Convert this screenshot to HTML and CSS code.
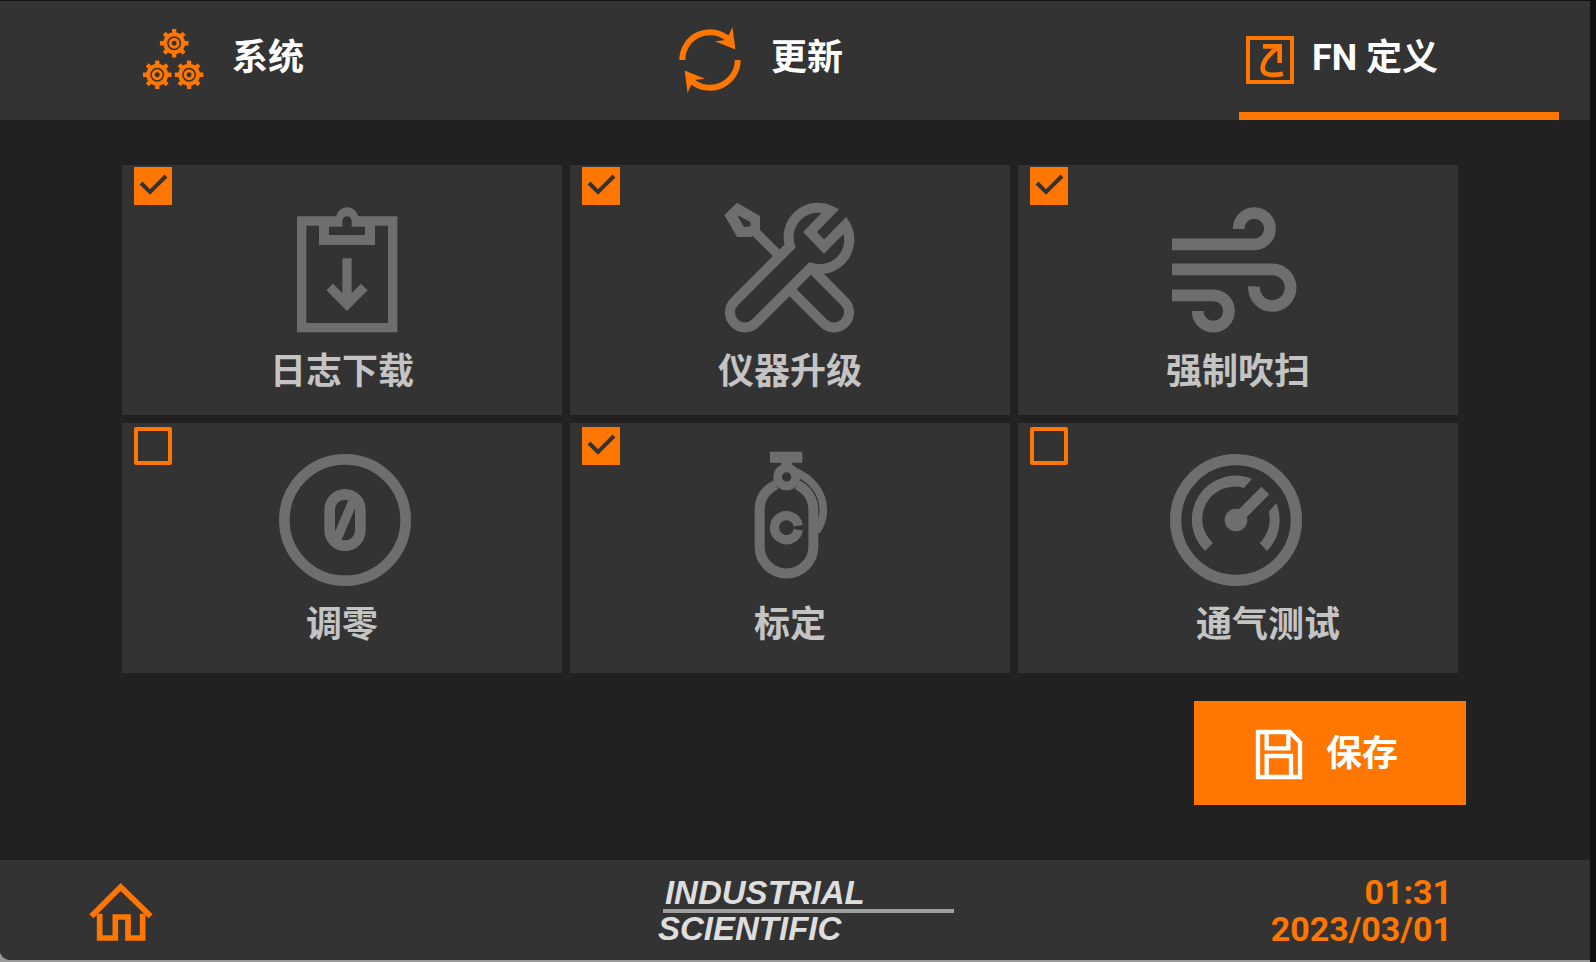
FILE: index.html
```html
<!DOCTYPE html>
<html lang="zh-CN">
<head>
    <meta charset="UTF-8">
    <meta name="viewport" content="width=device-width, initial-scale=1.0">
    <title>FN 定义</title>
    <link rel="stylesheet" href="styles.css">
</head>
<body>
    <div class="frame">
    <div class="screen">
        <nav class="tabs">
            <a class="tab" href="#system">
                <svg class="icon-gears" viewBox="0 0 184 184" aria-hidden="true">
                    <defs>
                        <g id="gear">
                            <circle r="27" stroke-width="12"/>
                            <circle r="12" stroke-width="9"/>
                            <path stroke-width="13" d="M0-43V-30M0 43V30M-43 0H-30M43 0H30M-30-30l9 9M30 30l-9-9M30-30l-9 9M-30 30l9-9"/>
                        </g>
                    </defs>
                    <use href="#gear" x="94" y="43"/>
                    <use href="#gear" x="43" y="138"/>
                    <use href="#gear" x="139" y="138"/>
                </svg>
                <span class="tab-text">系统</span>
            </a>
            <a class="tab" href="#update">
                <svg class="icon-update" viewBox="0 0 200 200" aria-hidden="true">
                    <path stroke-width="18" d="M16 100A84 84 0 0 1 157 38M184 100A84 84 0 0 1 43 162"/>
                    <path class="solid" d="M168 0L177 68L115 43L143 40L157 24ZM32 200L23 132L85 157L57 160L43 176Z"/>
                </svg>
                <span class="tab-text">更新</span>
            </a>
            <a class="tab active" href="#fn">
                <svg class="icon-fn" viewBox="0 0 144 144" aria-hidden="true">
                    <rect x="6" y="6" width="132" height="132" stroke-width="12"/>
                    <path stroke-width="14" d="M51 31H101V81"/>
                    <path stroke-width="14" d="M99 32C70 53 50 75 50 96C50 118 78 120 111 113"/>
                </svg>
                <span class="tab-text">FN 定义</span>
            </a>
        </nav>

        <main>
            <form class="functions">
                <div class="tiles">
                    <label class="tile">
                        <input type="checkbox" name="log" checked>
                        <svg viewBox="0 0 396 396" aria-hidden="true">
                            <path stroke-width="28" d="M129 60H77V380H350V60H297"/>
                            <path class="solid" fill-rule="evenodd" d="M129 46H181A33 33 0 0 1 246 46H297V132H129ZM159 77V102H267V77H227V60A14 14 0 0 0 199 60V77Z"/>
                            <path stroke-width="28" d="M213 172V300M161 258L213 310L265 258"/>
                        </svg>
                        <span class="tile-text">日志下载</span>
                    </label>
                    <label class="tile">
                        <input type="checkbox" name="upgrade" checked>
                        <svg viewBox="0 0 396 396" aria-hidden="true">
                            <path class="solid" fill-rule="evenodd" d="M39 5L108 45V84L83 108H39L1 42ZM39 42L60 78L80 76V64Z"/>
                            <path stroke-width="28" d="M92 91L162 161"/>
                            <path stroke-width="30" d="M31 302L198 135A88 88 0 0 1 320 29L258 93L300 137L364 72A88 88 0 0 1 261 200L95 366A45 45 0 0 1 31 302Z"/>
                            <path stroke-width="30" d="M265 205L362 302A45 45 0 0 1 298 366L196 264"/>
                        </svg>
                        <span class="tile-text">仪器升级</span>
                    </label>
                    <label class="tile">
                        <input type="checkbox" name="purge" checked>
                        <svg viewBox="0 0 396 396" aria-hidden="true">
                            <path stroke-width="35" d="M0 130H247A47 47 0 1 0 200 84M0 205H300A55 55 0 1 1 246 256M0 283H124A47 47 0 1 1 77 330"/>
                        </svg>
                        <span class="tile-text">强制吹扫</span>
                    </label>
                    <label class="tile">
                        <input type="checkbox" name="zero">
                        <svg viewBox="0 0 396 396" aria-hidden="true">
                            <circle cx="207" cy="198" r="182" stroke-width="32"/>
                            <rect x="161" y="121" width="92" height="154" rx="46" stroke-width="32"/>
                            <path stroke-width="28" d="M235 132L179 264"/>
                        </svg>
                        <span class="tile-text">调零</span>
                    </label>
                    <label class="tile">
                        <input type="checkbox" name="calibrate" checked>
                        <svg viewBox="0 0 396 396" aria-hidden="true">
                            <path class="solid" d="M138-7H235V26H205V40H172V26H138Z"/>
                            <circle cx="188" cy="69" r="27" stroke-width="26"/>
                            <path stroke-width="30" d="M156 92C122 108 107 136 107 168V278A80 80 0 0 0 268 278V168C268 136 250 108 220 92"/>
                            <path stroke-width="23" d="M205 49C268 74 298 120 298 168C298 196 290 214 278 232"/>
                            <path stroke-width="28" d="M223 215A36 36 0 1 0 223 227"/>
                        </svg>
                        <span class="tile-text">标定</span>
                    </label>
                    <label class="tile">
                        <input type="checkbox" name="bump">
                        <svg viewBox="0 0 396 396" aria-hidden="true">
                            <circle cx="192" cy="198" r="181" stroke-width="34"/>
                            <path class="solid" d="M240 74A132 132 0 0 0 99 291L123 267A97 97 0 0 1 216 102ZM313 148A132 132 0 0 1 285 291L263 267A97 97 0 0 0 290 173Z"/>
                            <circle class="solid" cx="192" cy="198" r="34"/>
                            <path stroke-width="33" d="M192 198L280 110"/>
                        </svg>
                        <span class="tile-text shifted">通气测试</span>
                    </label>
                </div>

                <div class="actions">
                    <button type="submit" class="save">
                        <svg class="icon-save" viewBox="0 0 138 147" aria-hidden="true">
                            <path stroke-width="13" d="M6 6H101L132 37V141H6Z"/>
                            <path stroke-width="13" d="M32 6V55H97V6M32 141V78H105V141"/>
                        </svg>
                        <span>保存</span>
                    </button>
                </div>
            </form>
        </main>

        <footer class="bottom">
            <a class="home" href="#home" aria-label="Home">
                <svg class="icon-home" viewBox="0 0 192 177" aria-hidden="true">
                    <path stroke-width="17" d="M7 103L95 15L185 103"/>
                    <path stroke-width="17" d="M32 95V168H79V105H117V168H161V95"/>
                </svg>
            </a>
            <div class="logo">
                <span class="logo-top">INDUSTRIAL</span>
                <span class="logo-bottom">SCIENTIFIC</span>
            </div>
            <div class="clock">
                <span>01:31</span>
                <span>2023/03/01</span>
            </div>
        </footer>
    </div>
    </div>
</body>
</html>
```
FILE: styles.css
```css
* {
    box-sizing: border-box;
}

body {
    margin: 0;
    padding: 1px 6px 0 0;
    background-color: #111;
    color: white;
    font-family: Roboto, "Noto Sans CJK SC", sans-serif;
    font-size: 36px;
    font-weight: bold;
    line-height: 44px;
}

svg {
    display: block;
    fill: none;
    stroke: currentColor;
    overflow: visible;
}

.solid {
    fill: currentColor;
    stroke: none;
}

.frame {
    display: flex;
    min-height: calc(100vh - 1px);
    padding-bottom: 2px;
    background-color: #999;
}

.screen {
    flex: 1;
    display: flex;
    flex-direction: column;
    background-color: #212121;
    border-bottom-left-radius: 10px;
    overflow: hidden;
}

/* tabs */
.tabs {
    display: grid;
    grid-template-columns: 19fr 20fr 320px;
    height: 119px;
    padding: 0 31px 0 143px;
    background-color: #333;
}

.tab {
    display: flex;
    align-items: center;
    padding-bottom: 2px;
    color: #ff7600;
    text-decoration: none;
}

.tab-text {
    padding-bottom: 4px;
    color: white;
}

.tab.active {
    padding: 6px 0 0 7px;
    border-bottom: 8px solid #ff7600;
}

.icon-gears {
    width: 61px;
    height: 61px;
    margin-right: 28px;
}

.icon-update {
    width: 66px;
    height: 66px;
    margin-right: 28px;
}

.icon-fn {
    width: 48px;
    height: 48px;
    margin-right: 18px;
}

/* function tiles */
main {
    flex: 1;
    padding-top: 45px;
}

.tiles {
    display: grid;
    grid-template-columns: repeat(3, 1fr);
    gap: 8px;
    padding: 0 132px 0 122px;
}

.tile {
    position: relative;
    display: flex;
    flex-direction: column;
    align-items: center;
    gap: 17px;
    height: 250px;
    padding-top: 36px;
    background-color: #333;
    color: #6e6e6e;
}

.tile svg {
    width: 132px;
    height: 132px;
}

.tile-text {
    color: #c4c4c4;
}

.tile-text.shifted {
    padding-left: 60px;
}

.tile input {
    appearance: none;
    position: absolute;
    top: 2px;
    left: 12px;
    width: 38px;
    height: 38px;
    margin: 0;
    border: 4px solid #ff7600;
    border-radius: 2px;
}

.tile input:checked {
    border: none;
    border-radius: 0;
    background: #ff7600 url("data:image/svg+xml,%3Csvg xmlns='http://www.w3.org/2000/svg' viewBox='0 0 38 38'%3E%3Cpath d='M7 16l9 9L32 9' fill='none' stroke='%23333' stroke-width='4'/%3E%3C/svg%3E");
}

.tile:nth-child(n+4) {
    padding-top: 31px;
}

.tile:nth-child(n+4) input {
    top: 4px;
}

/* save */
.actions {
    display: flex;
    justify-content: flex-end;
    padding: 28px 124px 0 0;
}

.save {
    display: flex;
    align-items: center;
    justify-content: center;
    gap: 24px;
    width: 272px;
    height: 104px;
    padding: 2px 6px 0 0;
    border: none;
    background-color: #ff7600;
    color: white;
    font: inherit;
    cursor: pointer;
}

.icon-save {
    width: 46px;
    height: 49px;
}

/* bottom bar */
.bottom {
    display: grid;
    grid-template-columns: 13fr 14fr auto;
    align-items: center;
    height: 100px;
    padding: 2px 138px 0 89px;
    background-color: #333;
}

.home {
    color: #ff7600;
}

.icon-home {
    width: 64px;
    height: 59px;
}

.logo {
    display: flex;
    flex-direction: column;
    width: 296px;
    color: #dedede;
    font-family: "Liberation Sans", Arial, sans-serif;
    font-size: 33px;
    font-style: italic;
    line-height: 32px;
}

.logo-top {
    margin-left: 5px;
    padding-left: 2px;
    border-bottom: 4px solid #a0a0a0;
}

.clock {
    display: flex;
    flex-direction: column;
    color: #ff7600;
    font-size: 34px;
    line-height: 37px;
    text-align: right;
}
```
